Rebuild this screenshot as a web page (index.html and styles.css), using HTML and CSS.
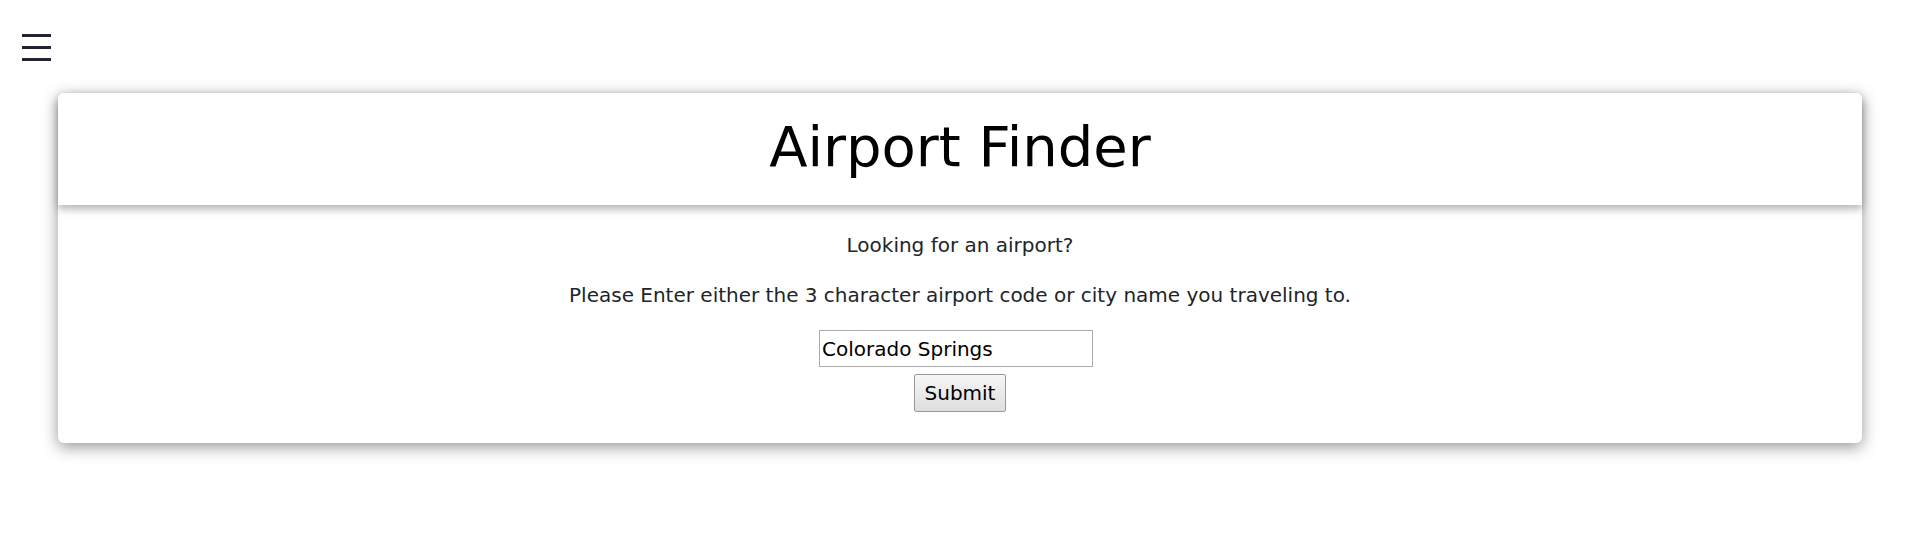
FILE: index.html
```html
<!DOCTYPE html>
<html>
<head>
<meta charset="utf-8">
<link rel="stylesheet" href="styles.css">
</head>
<body>
<div class="page">
  <div class="topbar">
    <div class="menu" aria-label="Menu"><span class="bar"></span><span class="bar"></span><span class="bar"></span></div>
  </div>
  <div class="card">
    <div class="card-header"><h1 class="title">Airport Finder</h1></div>
    <div class="card-body">
      <p class="line first">Looking for an airport?</p>
      <p class="line second">Please Enter either the 3 character airport code or city name you traveling to.</p>
      <form class="form">
        <input class="search" type="text" value="Colorado Springs">
        <button class="submit" type="button">Submit</button>
      </form>
    </div>
  </div>
</div>
</body>
</html>
```
FILE: styles.css
```css
html, body { margin: 0; padding: 0; background: #fff; }
body { font-family: "DejaVu Sans", Verdana, sans-serif; color: #212529; }
.page { min-height: 544px; box-sizing: border-box; padding-bottom: 60px; }
.topbar { height: 93px; box-sizing: border-box; padding: 34px 0 0 22px; }
.menu { display: flex; flex-direction: column; gap: 9px; width: 29px; }
.bar { display: block; width: 29px; height: 3px; background: #222233; }
.card {
  margin: 0 58px; background: #fff; border-radius: 6px;
  box-shadow: 0 4px 16px rgba(0,0,0,0.42);
}
.card-header {
  height: 112px; box-sizing: border-box; padding-bottom: 6px;
  display: flex; align-items: center; justify-content: center;
  box-shadow: 0 4px 8px rgba(0,0,0,0.3); position: relative;
  border-radius: 6px 6px 0 0; background: #fff;
}
.title { margin: 0; font-weight: normal; font-size: 56px; color: #000; }
.card-body { text-align: center; padding: 29px 0 31px; }
.line { margin: 0; font-size: 20px; line-height: 23px; }
.second { margin-top: 27px; }
.form { margin-top: 23px; display: flex; flex-direction: column; align-items: center; gap: 7px; }
.search {
  width: 274px; height: 37px; box-sizing: border-box; border: 1px solid #aaa;
  font-family: inherit; font-size: 20px; padding: 0 2px; color: #000;
  margin-right: 8px;
}
.submit {
  width: 92px; height: 38px; box-sizing: border-box; border: 1px solid #999;
  background: linear-gradient(#f6f6f6, #dedede); font-family: inherit; font-size: 20px; color: #000;
  padding: 0; border-radius: 2px;
}
```
